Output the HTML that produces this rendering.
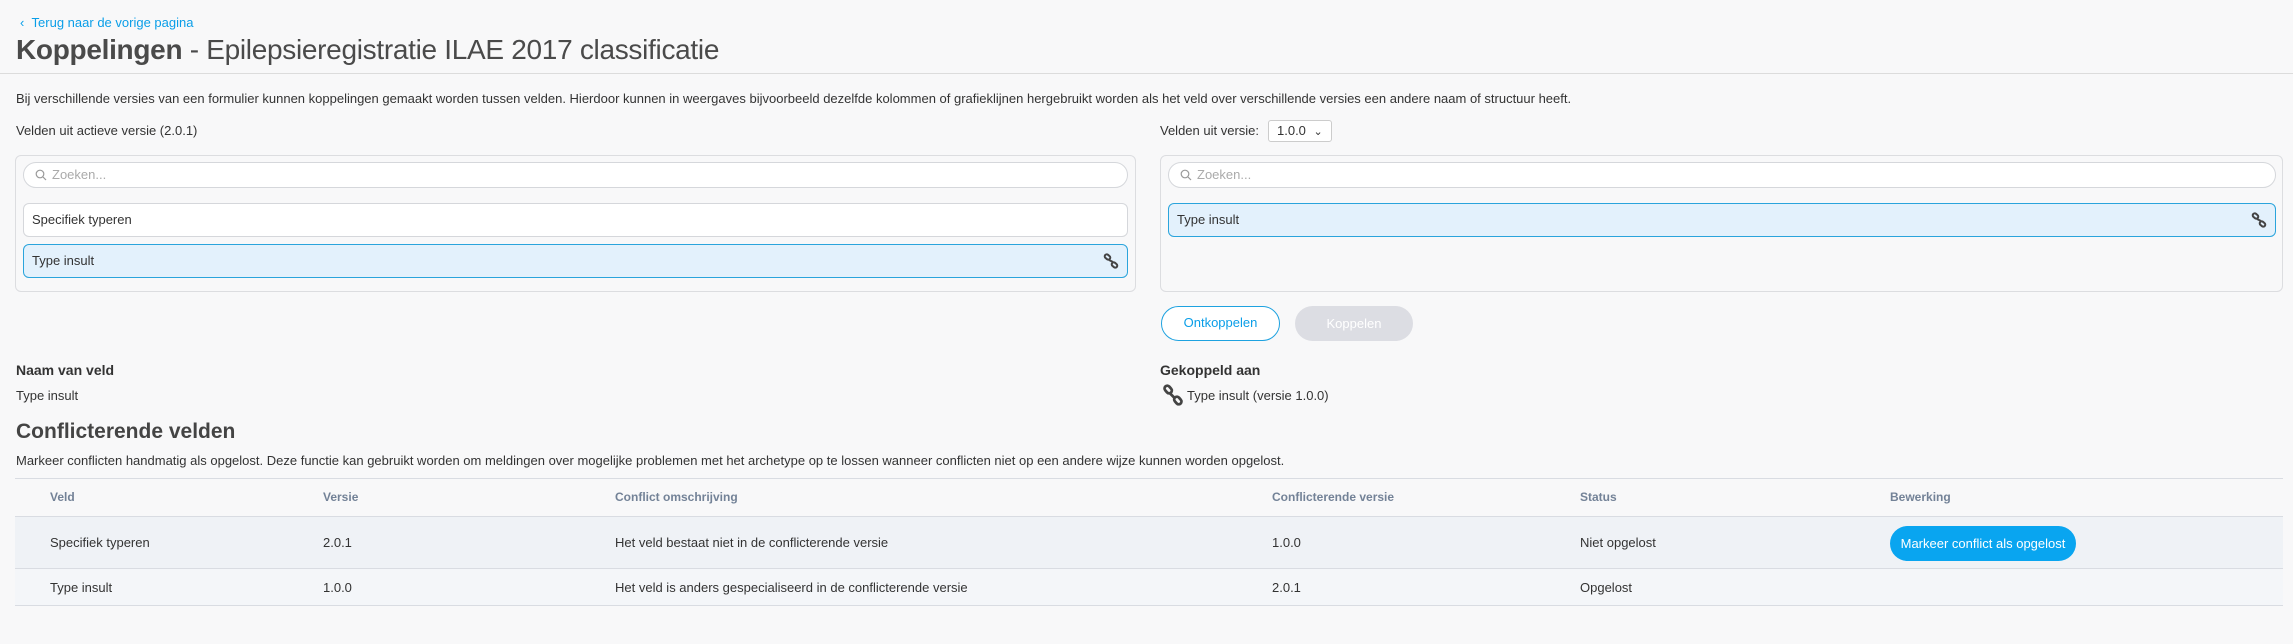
<!DOCTYPE html>
<html><head><meta charset="utf-8"><style>
*{box-sizing:border-box;margin:0;padding:0}
body{width:2293px;height:644px;background:#f8f8f9;font-family:"Liberation Sans",sans-serif;color:#333;font-size:13px;position:relative;overflow:hidden}
.a{position:absolute;white-space:nowrap}
.panel{position:absolute;border:1px solid #dcdde0;border-radius:6px;background:#f8f8f9}
.search{position:absolute;background:#fff;border:1px solid #d5d7db;border-radius:13px;height:26px;color:#aaa;font-size:13px;line-height:24px;padding-left:28px}
.search svg{position:absolute;left:11px;top:6px}
.item{position:absolute;background:#fff;border:1px solid #d5d7db;border-radius:6px;height:34px;line-height:32px;padding-left:8px;font-size:13px}
.item.sel{background:#e3f1fc;border-color:#2aa4dc}
.item svg{position:absolute;right:8px;top:8px}
.th{color:#738297;font-weight:bold;font-size:12px}
.hl{position:absolute;left:15px;width:2268px;height:1px;background:#d9dce2}
</style></head><body>
<div class="a" style="left:20px;top:15px;color:#0a9ee8;font-size:13px">‹&nbsp;&nbsp;Terug naar de vorige pagina</div>
<div class="a" style="left:16px;top:34px;font-size:28px;color:#4a4a4a;letter-spacing:-0.3px"><b>Koppelingen</b> - Epilepsieregistratie ILAE 2017 classificatie</div>
<div style="position:absolute;left:0;top:73px;width:2293px;height:1px;background:#dcdcdc"></div>
<div class="a" style="left:16px;top:91px">Bij verschillende versies van een formulier kunnen koppelingen gemaakt worden tussen velden. Hierdoor kunnen in weergaves bijvoorbeeld dezelfde kolommen of grafieklijnen hergebruikt worden als het veld over verschillende versies een andere naam of structuur heeft.</div>
<div class="a" style="left:16px;top:123px">Velden uit actieve versie (2.0.1)</div>
<div class="panel" style="left:15px;top:155px;width:1121px;height:137px"></div>
<div class="search" style="left:23px;top:162px;width:1105px"><svg width="12" height="12" viewBox="0 0 12 12" fill="none" stroke="#999" stroke-width="1.2"><circle cx="5" cy="5" r="3.8"/><path d="M8 8l3 3"/></svg>Zoeken...</div>
<div class="item" style="left:23px;top:203px;width:1105px">Specifiek typeren</div>
<div class="item sel" style="left:23px;top:244px;width:1105px">Type insult<svg width="16" height="16" viewBox="0 0 16 16" fill="none" stroke="#444" stroke-width="2"><rect x="1.5" y="2" width="6" height="4" rx="2" transform="rotate(40 4.5 4)"/><rect x="8.5" y="10" width="6" height="4" rx="2" transform="rotate(40 11.5 12)"/><path d="M6 7l4 2"/></svg></div>
<div class="a" style="left:1160px;top:123px">Velden uit versie:</div>
<div class="a" style="left:1268px;top:120px;width:64px;height:22px;border:1px solid #ccc;border-radius:3px;background:#fff;padding-left:8px;line-height:20px">1.0.0 <span style="font-size:11px;margin-left:4px">⌄</span></div>
<div class="panel" style="left:1160px;top:155px;width:1123px;height:137px"></div>
<div class="search" style="left:1168px;top:162px;width:1108px"><svg width="12" height="12" viewBox="0 0 12 12" fill="none" stroke="#999" stroke-width="1.2"><circle cx="5" cy="5" r="3.8"/><path d="M8 8l3 3"/></svg>Zoeken...</div>
<div class="item sel" style="left:1168px;top:203px;width:1108px">Type insult<svg width="16" height="16" viewBox="0 0 16 16" fill="none" stroke="#444" stroke-width="2"><rect x="1.5" y="2" width="6" height="4" rx="2" transform="rotate(40 4.5 4)"/><rect x="8.5" y="10" width="6" height="4" rx="2" transform="rotate(40 11.5 12)"/><path d="M6 7l4 2"/></svg></div>
<div class="a" style="left:1161px;top:306px;width:119px;height:35px;border:1.5px solid #1ea2e0;border-radius:18px;color:#0a9ee8;text-align:center;line-height:32px;background:#fff">Ontkoppelen</div>
<div class="a" style="left:1295px;top:306px;width:118px;height:35px;border-radius:18px;background:#dcdde3;color:#fff;text-align:center;line-height:35px">Koppelen</div>
<div class="a" style="left:16px;top:362px;font-weight:bold;font-size:14px">Naam van veld</div>
<div class="a" style="left:16px;top:388px">Type insult</div>
<div class="a" style="left:1160px;top:362px;font-weight:bold;font-size:14px">Gekoppeld aan</div>
<svg class="a" style="left:1162px;top:384px" width="22" height="22" viewBox="0 0 16 16" fill="none" stroke="#444" stroke-width="2"><rect x="1.5" y="2" width="6" height="4" rx="2" transform="rotate(50 4.5 4)"/><rect x="8.5" y="10" width="6" height="4" rx="2" transform="rotate(50 11.5 12)"/><path d="M6 7l3 3"/></svg>
<div class="a" style="left:1187px;top:388px">Type insult (versie 1.0.0)</div>
<div class="a" style="left:16px;top:420px;font-size:21px;font-weight:bold;color:#444">Conflicterende velden</div>
<div class="a" style="left:16px;top:453px">Markeer conflicten handmatig als opgelost. Deze functie kan gebruikt worden om meldingen over mogelijke problemen met het archetype op te lossen wanneer conflicten niet op een andere wijze kunnen worden opgelost.</div>
<div class="hl" style="top:478px"></div>
<div style="position:absolute;left:15px;top:516px;width:2268px;height:52px;background:#eff2f6"></div>
<div style="position:absolute;left:15px;top:569px;width:2268px;height:36px;background:#f4f6f9"></div>
<div class="hl" style="top:516px"></div>
<div class="hl" style="top:568px"></div>
<div class="hl" style="top:605px"></div>
<div class="a th" style="left:50px;top:490px">Veld</div>
<div class="a th" style="left:323px;top:490px">Versie</div>
<div class="a th" style="left:615px;top:490px">Conflict omschrijving</div>
<div class="a th" style="left:1272px;top:490px">Conflicterende versie</div>
<div class="a th" style="left:1580px;top:490px">Status</div>
<div class="a th" style="left:1890px;top:490px">Bewerking</div>
<div class="a" style="left:50px;top:535px">Specifiek typeren</div>
<div class="a" style="left:323px;top:535px">2.0.1</div>
<div class="a" style="left:615px;top:535px">Het veld bestaat niet in de conflicterende versie</div>
<div class="a" style="left:1272px;top:535px">1.0.0</div>
<div class="a" style="left:1580px;top:535px">Niet opgelost</div>
<div class="a" style="left:1890px;top:526px;width:186px;height:35px;border-radius:18px;background:#09a5f0;color:#fff;text-align:center;line-height:35px">Markeer conflict als opgelost</div>
<div class="a" style="left:50px;top:580px">Type insult</div>
<div class="a" style="left:323px;top:580px">1.0.0</div>
<div class="a" style="left:615px;top:580px">Het veld is anders gespecialiseerd in de conflicterende versie</div>
<div class="a" style="left:1272px;top:580px">2.0.1</div>
<div class="a" style="left:1580px;top:580px">Opgelost</div>
</body></html>
